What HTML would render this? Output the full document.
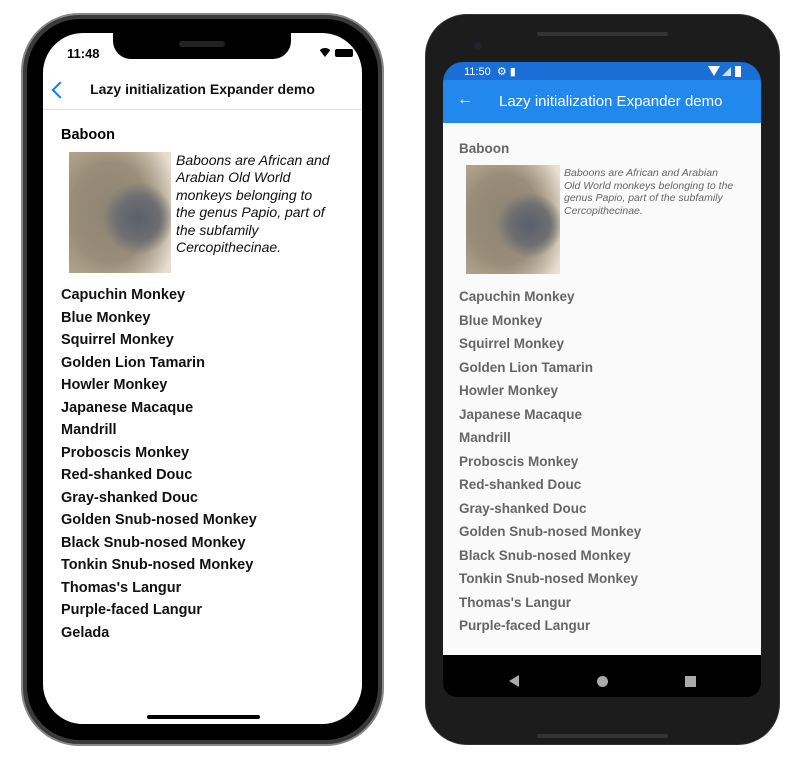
<!DOCTYPE html>
<html><head><style>
*{margin:0;padding:0;box-sizing:border-box}
body{width:800px;height:760px;background:#fff;position:relative;overflow:hidden;font-family:"Liberation Sans",sans-serif}
.a{position:absolute}
.ios li,.and li{list-style:none;position:absolute;white-space:nowrap}
.ios li{left:61px;font-size:14.5px;font-weight:bold;color:#111}
.and li{left:459px;font-size:13.5px;font-weight:bold;color:#666}
.img{background:radial-gradient(ellipse 35% 30% at 68% 55%,#5a5f6a 0%,#6d6e72 60%,transparent 100%),radial-gradient(ellipse 70% 75% at 40% 50%,#8d8473 0%,#9a8d78 55%,transparent 100%),linear-gradient(90deg,#b8ad98,#e9e0d2)}
</style></head><body>
<!-- iPhone -->
<div class="a" style="left:21px;top:13px;width:363px;height:733px;border-radius:58px;background:#3a3a3a;border:2px solid #888"></div>
<div class="a" style="left:27px;top:19px;width:351px;height:721px;border-radius:53px;background:#000"></div>
<div class="a" style="left:43px;top:33px;width:319px;height:691px;border-radius:40px;background:#fff;overflow:hidden">
  <div class="a" style="left:70px;top:0;width:178px;height:26px;background:#000;border-radius:0 0 18px 18px"></div>
  <div class="a" style="left:136px;top:8px;width:46px;height:6px;background:#222;border-radius:3px"></div>
  <div class="a" style="left:24px;top:13px;font-size:13px;font-weight:bold">11:48</div>
  <div class="a" style="left:275px;top:15px;width:14px;height:9px;border-radius:9px 9px 0 0;background:#000;clip-path:polygon(0 0,100% 0,50% 100%)"></div>
  <div class="a" style="left:292px;top:16px;width:18px;height:8px;border-radius:2px;background:#000"></div>
  <div class="a" style="left:11px;top:51px;width:12px;height:12px;border-left:2.5px solid #0a7aff;border-bottom:2.5px solid #0a7aff;transform:rotate(45deg)"></div>
  <div class="a" style="left:0;width:319px;top:48px;text-align:center;font-size:14px;font-weight:bold;color:#111">Lazy initialization Expander demo</div>
  <div class="a" style="left:0;top:76px;width:319px;height:1px;background:#ddd"></div>
  <div class="a" style="left:18px;top:94px;font-size:14.5px;font-weight:bold">Baboon</div>
  <div class="a img" style="left:26px;top:119px;width:102px;height:121px"></div>
  <div class="a" style="left:133px;top:119px;width:180px;font-size:14px;font-style:italic;line-height:17.4px;color:#111">Baboons are African and<br>Arabian Old World<br>monkeys belonging to<br>the genus Papio, part of<br>the subfamily<br>Cercopithecinae.</div>
  <div class="a" style="left:104px;top:682px;width:113px;height:4px;border-radius:2px;background:#000"></div>
</div>
<ul class="ios">
<li style="top:287px">Capuchin Monkey</li><li style="top:309.5px">Blue Monkey</li><li style="top:332px">Squirrel Monkey</li><li style="top:354.5px">Golden Lion Tamarin</li><li style="top:377px">Howler Monkey</li><li style="top:399.5px">Japanese Macaque</li><li style="top:422px">Mandrill</li><li style="top:444.5px">Proboscis Monkey</li><li style="top:467px">Red-shanked Douc</li><li style="top:489.5px">Gray-shanked Douc</li><li style="top:512px">Golden Snub-nosed Monkey</li><li style="top:534.5px">Black Snub-nosed Monkey</li><li style="top:557px">Tonkin Snub-nosed Monkey</li><li style="top:579.5px">Thomas's Langur</li><li style="top:602px">Purple-faced Langur</li><li style="top:624.5px">Gelada</li>
</ul>
<!-- Android -->
<div class="a" style="left:425px;top:14px;width:355px;height:731px;border-radius:42px;background:#1c1c1c;border:1px solid #333"></div>
<div class="a" style="left:537px;top:32px;width:131px;height:4px;border-radius:2px;background:#333"></div>
<div class="a" style="left:474px;top:42px;width:8px;height:8px;border-radius:50%;background:#223"></div>
<div class="a" style="left:537px;top:734px;width:131px;height:4px;border-radius:2px;background:#333"></div>
<div class="a" style="left:443px;top:62px;width:318px;height:635px;border-radius:20px 20px 14px 14px;background:#000;overflow:hidden">
  <div class="a" style="left:0;top:0;width:318px;height:18px;background:#1a6fd6"></div>
  <div class="a" style="left:21px;top:3px;font-size:11px;color:#fff">11:50 &nbsp;⚙ ▮</div>
  <div class="a" style="left:265px;top:4px;width:12px;height:10px;background:#fff;clip-path:polygon(0 0,100% 0,50% 100%)"></div>
  <div class="a" style="left:279px;top:5px;width:9px;height:9px;background:#cfe0f7;clip-path:polygon(100% 0,100% 100%,0 100%)"></div>
  <div class="a" style="left:292px;top:4px;width:6px;height:11px;background:#fff"></div>
  <div class="a" style="left:0;top:18px;width:318px;height:43px;background:#2189ee"></div>
  <div class="a" style="left:14px;top:29px;color:#fff;font-size:16px">&#8592;</div>
  <div class="a" style="left:56px;top:31px;color:#fff;font-size:15px">Lazy initialization Expander demo</div>
  <div class="a" style="left:0;top:61px;width:318px;height:532px;background:#fafafa"></div>
  <div class="a" style="left:16px;top:79px;font-size:13.5px;font-weight:bold;color:#666">Baboon</div>
  <div class="a img" style="left:23px;top:103px;width:94px;height:109px"></div>
  <div class="a" style="left:121px;top:105px;width:190px;font-size:10.5px;font-style:italic;line-height:12.7px;color:#666">Baboons are African and Arabian<br>Old World monkeys belonging to the<br>genus Papio, part of the subfamily<br>Cercopithecinae.</div>
  <div class="a" style="left:66px;top:613px;width:0;height:0;border-top:6px solid transparent;border-bottom:6px solid transparent;border-right:10px solid #aaa"></div>
  <div class="a" style="left:154px;top:614px;width:11px;height:11px;border-radius:50%;background:#aaa"></div>
  <div class="a" style="left:242px;top:614px;width:11px;height:11px;background:#aaa"></div>
</div>
<ul class="and">
<li style="top:289px">Capuchin Monkey</li><li style="top:312.5px">Blue Monkey</li><li style="top:336px">Squirrel Monkey</li><li style="top:359.5px">Golden Lion Tamarin</li><li style="top:383px">Howler Monkey</li><li style="top:406.5px">Japanese Macaque</li><li style="top:430px">Mandrill</li><li style="top:453.5px">Proboscis Monkey</li><li style="top:477px">Red-shanked Douc</li><li style="top:500.5px">Gray-shanked Douc</li><li style="top:524px">Golden Snub-nosed Monkey</li><li style="top:547.5px">Black Snub-nosed Monkey</li><li style="top:571px">Tonkin Snub-nosed Monkey</li><li style="top:594.5px">Thomas's Langur</li><li style="top:618px">Purple-faced Langur</li>
</ul>
</body></html>
